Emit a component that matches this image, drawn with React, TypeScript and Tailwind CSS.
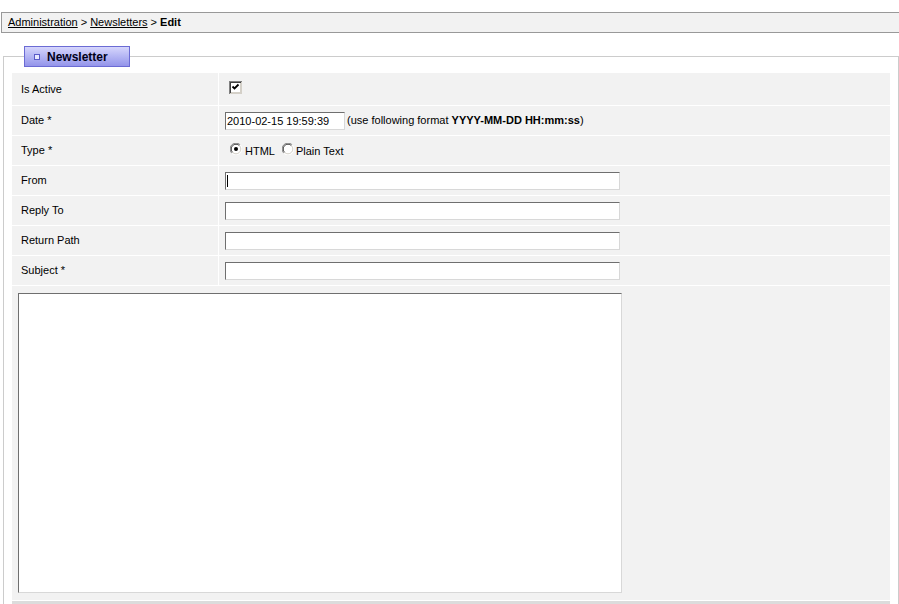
import React from "react";

const font = { fontFamily: '"Liberation Sans", Arial, sans-serif' };

function CheckBox() {
  return (
    <svg width="13" height="13" viewBox="0 0 13 13" shapeRendering="crispEdges">
      <rect x="0" y="0" width="13" height="13" fill="#808080" />
      <rect x="1" y="1" width="12" height="12" fill="#d4d0c8" />
      <rect x="1" y="1" width="11" height="11" fill="#404040" />
      <rect x="2" y="2" width="10" height="10" fill="#d4d0c8" />
      <rect x="2" y="2" width="9" height="9" fill="#ffffff" />
      <path d="M3.5 5.5 L5.5 7.5 L9.5 3.5" stroke="#000" strokeWidth="1.8" fill="none" shapeRendering="auto" />
    </svg>
  );
}

function Radio({ checked }: { checked?: boolean }) {
  return (
    <svg width="12" height="12" viewBox="0 0 12 12">
      <circle cx="6" cy="6" r="5.5" fill="#ffffff" />
      <path d="M1.8 10.2 A5.5 5.5 0 0 1 10.2 1.8" stroke="#808080" strokeWidth="1" fill="none" />
      <path d="M10.2 1.8 A5.5 5.5 0 0 1 1.8 10.2" stroke="#ffffff" strokeWidth="1" fill="none" />
      <path d="M2.6 9.4 A4.5 4.5 0 0 1 9.4 2.6" stroke="#404040" strokeWidth="1" fill="none" />
      <path d="M9.4 2.6 A4.5 4.5 0 0 1 2.6 9.4" stroke="#d4d0c8" strokeWidth="1" fill="none" />
      {checked && <circle cx="6" cy="6" r="2" fill="#000" />}
    </svg>
  );
}

const inputCls =
  "h-[18px] w-[395px] bg-white border border-t-[#6f6f6f] border-l-[#6f6f6f] border-r-[#d8d8d8] border-b-[#d8d8d8] outline-none text-[11px] px-[1px]";

function Row({ label, tall, children }: { label: string; tall?: boolean; children: React.ReactNode }) {
  return (
    <div className={`grid grid-cols-[206px_1fr] gap-x-[1px] ${tall ? "h-[32px]" : "h-[29px]"}`}>
      <div className="bg-[#f2f2f2] flex items-center pl-[9px] text-[11px] text-black">{label}</div>
      <div className="bg-[#f2f2f2] flex items-center pl-[6px] text-[11px] text-black">{children}</div>
    </div>
  );
}

export default function App() {
  return (
    <div className="min-h-screen bg-white pt-[12px] text-black" style={font}>
      {/* breadcrumb */}
      <div className="ml-[1px] h-[21px] bg-[#f2f2f2] border-y border-l border-[#999999] flex items-center pl-[6px] text-[11px]">
        <a href="#" className="underline text-black">Administration</a>
        <span className="mx-[3px]">&gt;</span>
        <a href="#" className="underline text-black">Newsletters</a>
        <span className="mx-[3px]">&gt;</span>
        <span className="font-bold">Edit</span>
      </div>

      <fieldset className="ml-[3px] mt-[13px] border border-[#cccccc] px-[8px] pt-[6px] pb-[20px]">
        <legend className="ml-[12px]">
          <div className="w-[106px] h-[21px] border border-[#6b6bd4] bg-gradient-to-b from-[#d6d6fc] to-[#9494ea] flex items-center pl-[9px] gap-[7px]">
            <span className="w-[6px] h-[6px] border border-[#5a5ac8] bg-[#e8e8ff]" />
            <span className="text-[12px] font-bold text-[#000018] leading-none">Newsletter</span>
          </div>
        </legend>

        <div className="flex flex-col gap-y-[1px] bg-white">
          <Row label="Is Active" tall>
            <span className="ml-[4px] -mt-[3px] flex">
              <CheckBox />
            </span>
          </Row>
          <Row label="Date *">
            <input
              readOnly
              value="2010-02-15 19:59:39"
              className="h-[18px] w-[120px] bg-white border border-t-[#6f6f6f] border-l-[#6f6f6f] border-r-[#d8d8d8] border-b-[#d8d8d8] outline-none text-[11px] px-[1px] text-black"
            />
            <span className="ml-[2px]">
              (use following format <b>YYYY-MM-DD HH:mm:ss</b>)
            </span>
          </Row>
          <Row label="Type *">
            <div className="flex items-center pl-[5px] pt-[2px]">
              <span className="flex -mt-[5px]">
                <Radio checked />
              </span>
              <span className="ml-[3px]">HTML</span>
              <span className="flex -mt-[5px] ml-[7px]">
                <Radio />
              </span>
              <span className="ml-[2px]">Plain Text</span>
            </div>
          </Row>
          <Row label="From">
            <div className="relative flex">
              <input readOnly className={inputCls} />
              <span className="absolute left-[2px] top-[3px] w-[1px] h-[12px] bg-black" />
            </div>
          </Row>
          <Row label="Reply To">
            <input readOnly className={inputCls} />
          </Row>
          <Row label="Return Path">
            <input readOnly className={inputCls} />
          </Row>
          <Row label="Subject *">
            <input readOnly className={inputCls} />
          </Row>
          <div className="bg-[#f2f2f2] h-[314px] pt-[7px] pl-[6px]">
            <textarea
              readOnly
              className="block w-[604px] h-[300px] resize-none bg-white border border-t-[#6f6f6f] border-l-[#6f6f6f] border-r-[#d8d8d8] border-b-[#d8d8d8] outline-none"
            />
          </div>
          <div className="bg-[#dcdcdc] h-[29px]" />
        </div>
      </fieldset>
    </div>
  );
}
